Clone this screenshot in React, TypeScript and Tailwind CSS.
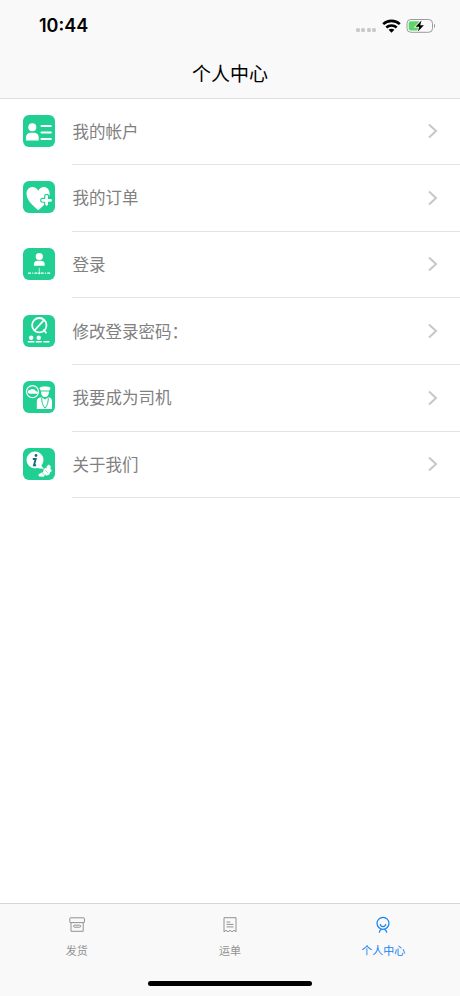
import { useState, type ReactNode } from "react";

const AccountIcon = () => (
  <g fill="#fff">
    <circle cx="9.3" cy="12.2" r="4" />
    <path d="M3 25.6v-3c0-3 2-4.8 4.6-4.8h3.4c2.7 0 4.7 1.8 4.7 4.8v3z" />
    <path d="M18.5 11h9.300M18.5 17.5h9.300M18.5 23.900h9.300" stroke="#fff" strokeWidth="2" strokeLinecap="round" />
  </g>
);

const OrderIcon = () => (
  <g>
    <path d="M15.3 29.3C9 23.5 3.5 19 3.5 12.5c0-7 8.5-9 11.8-2.700C18.5 3.5 26.6 5.5 26.6 12.5c0 6.5-5 11-11.3 16.8z" fill="#fff" />
    <path d="M23.6 15.3v8M19.6 19.3h8" stroke="#21cf92" strokeWidth="5" strokeLinecap="round" />
    <path d="M23.6 15.3v8M19.6 19.3h8" stroke="#fff" strokeWidth="2.8" strokeLinecap="round" />
  </g>
);

const LoginIcon = () => (
  <g fill="#fff">
    <circle cx="16.3" cy="8.5" r="3.6" />
    <path d="M10.9 17.8v-1.3c0-2.4 1.6-3.700 3.4-3.700h4c1.9 0 3.4 1.300 3.4 3.700v1.300z" />
    <path d="M16.3 20v5" stroke="#fff" strokeWidth=".7" />
    <path d="M5 25.2h23" stroke="#fff" strokeWidth="1.3" strokeDasharray="3 1.2 1 1.2" />
    <circle cx="16.3" cy="25.2" r="1" />
  </g>
);

const PasswordIcon = () => (
  <g fill="none" stroke="#fff">
    <circle cx="16.3" cy="10.2" r="7.2" strokeWidth="1.8" />
    <path d="M20.9 5.1 11.5 15.5" strokeWidth="1.8" />
    <path d="M20.5 14.5 23.4 18.2" strokeWidth="1.8" />
    <path d="M4.8 26.8h6.600M12.8 26.8h6M20.4 26.8h6" strokeWidth="1.5" />
    <circle cx="8.2" cy="22.7" r="2.2" fill="#fff" stroke="none" />
    <circle cx="15.7" cy="22.7" r="2.2" fill="#fff" stroke="none" />
  </g>
);

const DriverIcon = () => (
  <g fill="#fff">
    <circle cx="9.5" cy="10.6" r="6" fill="none" stroke="#fff" strokeWidth="1.2" />
    <path d="M5 9.8 8.6 8l2.5.3 1.6 1.6 2 .9v1.9H6.6L5 11.7z" />
    <path d="M16.4 6.9c1.7-1.8 9.5-1.8 11.2 0l-1.3 2.7h-8.600z" />
    <path d="M18 10.5h8c0 3.5-1.7 5.6-4 5.6s-4-2.1-4-5.6z" />
    <path d="M13.8 28v-7.5c0-2.5 1.5-3.8 4.7-4.2L22 18.5l3.5-2.2c2.7.4 3.5 1.7 3.5 4.2V28z" />
    <path d="M18.7 16.7c0 4.8 1 7.8 3.3 10.5 2.3-2.7 3.3-5.7 3.3-10.5" fill="none" stroke="#21cf92" strokeWidth="1" />
  </g>
);

const AboutIcon = () => (
  <g fill="#fff">
    <circle cx="12" cy="12" r="8.5" />
    <path d="m17 16 4 5-7-1z" />
    <circle cx="13" cy="7.5" r="1.4" fill="#176b78" />
    <path d="M9.8 11h2.900L11 17.3h2.100" fill="none" stroke="#176b78" strokeWidth="1.9" />
    <path d="m15.3 26.5 5.2-3 2.5 2.3-2.3 3-4.7-.2z" />
    <path d="m20.5 21.5 2-1.8 2.5.3 2.5 3.5-1.2 3-2.8 1.2-3.2-3z" />
    <path d="m23.5 18.5 2.2-2 2.1 1.8-.4 2.6 1.3 1-.6 2.3-3.800-3z" />
    <path d="m19 24.5 2.6 2.300M22.5 22.5l2.2 2.200" stroke="#21cf92" strokeWidth=".6" />
  </g>
);

const SendIcon = () => (
  <svg width="18" height="18" viewBox="0 0 18 18" fill="none" stroke="currentColor" strokeWidth="1">
    <rect x="1.8" y="1.8" width="14.6" height="4.8" rx=".5" />
    <path d="M3 6.600v8.700h12.200V6.600" />
    <rect x="5.5" y="9.2" width="7.2" height="2" rx="1" />
  </svg>
);

const WaybillIcon = () => (
  <svg width="18" height="18" viewBox="0 0 18 18" fill="none" stroke="currentColor" strokeWidth="1">
    <path d="M3 15.8V1.700h12v14.100l-2-1.5-2 1.5-2-1.5-2 1.5-2-1.5z" />
    <path d="M5.5 6h3.800M5.5 8.400h7M5.5 10.900h7" />
  </svg>
);

const ProfileIcon = () => (
  <svg width="18" height="18" viewBox="0 0 18 18" fill="none" stroke="currentColor" strokeWidth="1.2">
    <circle cx="9" cy="7.3" r="6" />
    <path d="M6.1 8.2c.9 3.3 4.9 3.3 5.8 0M5.2 16.8c.2-1.7 1-2.8 2.4-3.500M12.8 16.8c-.2-1.7-1-2.8-2.4-3.500" />
  </svg>
);

const menuItems: { label: string; icon: ReactNode }[] = [
  { label: "我的帐户", icon: <AccountIcon /> },
  { label: "我的订单", icon: <OrderIcon /> },
  { label: "登录", icon: <LoginIcon /> },
  { label: "修改登录密码：", icon: <PasswordIcon /> },
  { label: "我要成为司机", icon: <DriverIcon /> },
  { label: "关于我们", icon: <AboutIcon /> },
];

const tabs = [
  { label: "发货", icon: <SendIcon /> },
  { label: "运单", icon: <WaybillIcon /> },
  { label: "个人中心", icon: <ProfileIcon /> },
];

const StatusBar = () => (
  <div className="flex h-[51px] items-center justify-between pr-[24px] pl-[39px]">
    <span className="font-[Inter,sans-serif] text-[18px] leading-none font-semibold">10:44</span>
    <div className="flex items-center">
      <div className="mt-[9px] mr-[6px] flex gap-[1.5px]">
        {[0, 1, 2, 3].map((dot) => (
          <span key={dot} className="size-[4px] rounded-[1.5px] bg-[#c9c9c9]" />
        ))}
      </div>
      <svg width="19" height="14" viewBox="0 0 19 14" fill="none" stroke="#000" strokeWidth="2.6">
        <path d="M1.2 5.100c4.5-4.300 12.1-4.300 16.6 0M4.3 8.5c2.9-2.7 7.5-2.7 10.4 0" />
        <path d="m9.5 13.8-2.9-3c1.5-1.5 4.3-1.5 5.8 0z" fill="#000" stroke="none" />
      </svg>
      <svg className="ml-[5px]" width="30" height="16" viewBox="0 0 30 16">
        <rect x="1" y="1.5" width="25.5" height="12.8" rx="3.8" fill="none" stroke="#9b9b9b" />
        <rect x="2.7" y="3.2" width="12" height="9.4" rx="2" fill="#5bd667" />
        <path d="M28 5.8c1.5.6 1.5 3.6 0 4.200z" fill="#9b9b9b" />
        <path d="m15.5 2.5-6 6.3h3.7l-1.3 4.7 6-6.300h-3.700z" fill="#000" stroke="#f9f9f9" strokeWidth="1.6" paintOrder="stroke" />
      </svg>
    </div>
  </div>
);

const App = () => {
  const [activeTab, setActiveTab] = useState(2);

  return (
    <div className="flex h-[996px] w-[460px] flex-col bg-white font-['Liberation_Sans','Noto_Sans_CJK_SC',sans-serif]">
      <header className="h-[99px] shrink-0 border-b border-[#dedede] bg-[#f9f9f9] text-black">
        <StatusBar />
        <h1 className="flex h-[46px] items-center justify-center text-[19px] leading-none font-normal">个人中心</h1>
      </header>

      {/* Menu */}
      <main className="-mt-[0.7px] flex-1">
        {menuItems.map((item) => (
          <button key={item.label} className="flex h-[66.66px] w-full items-center pl-[23px] text-left">
            <svg className="mb-[2px] shrink-0" width="32" height="32" viewBox="0 0 32 32" fill="none">
              <rect width="32" height="32" rx="6" fill="#21cf92" />
              {item.icon}
            </svg>
            <span className="ml-[17px] flex h-full flex-1 items-center justify-between border-b border-[#e3e3e3] pr-[21px]">
              <span className="pt-[1.5px] pl-[0.6px] text-[16.5px] leading-none text-[#808080]">{item.label}</span>
              <svg width="12" height="16" viewBox="0 0 12 16" fill="none" stroke="#c7c7c7" strokeWidth="2">
                <path d="m2 1.5 7 6.500-7 6.500" />
              </svg>
            </span>
          </button>
        ))}
      </main>

      {/* Bottom tabs */}
      <footer className="flex h-[93px] shrink-0 flex-col border-t border-[#d6d6d6] bg-[#f9f9f9]">
        <nav className="grid h-[77px] grid-cols-3">
          {tabs.map((tab, index) => (
            <button
              key={tab.label}
              onClick={() => setActiveTab(index)}
              className={`flex flex-col items-center pt-[12px] ${
                activeTab === index ? "text-[#1283f5]" : "text-[#929292]"
              }`}
            >
              {tab.icon}
              <span className="mt-[12px] text-[11px] leading-none">{tab.label}</span>
            </button>
          ))}
        </nav>
        <div className="mx-auto h-[5px] w-[164px] rounded-full bg-black" />
      </footer>
    </div>
  );
};

export default App;
